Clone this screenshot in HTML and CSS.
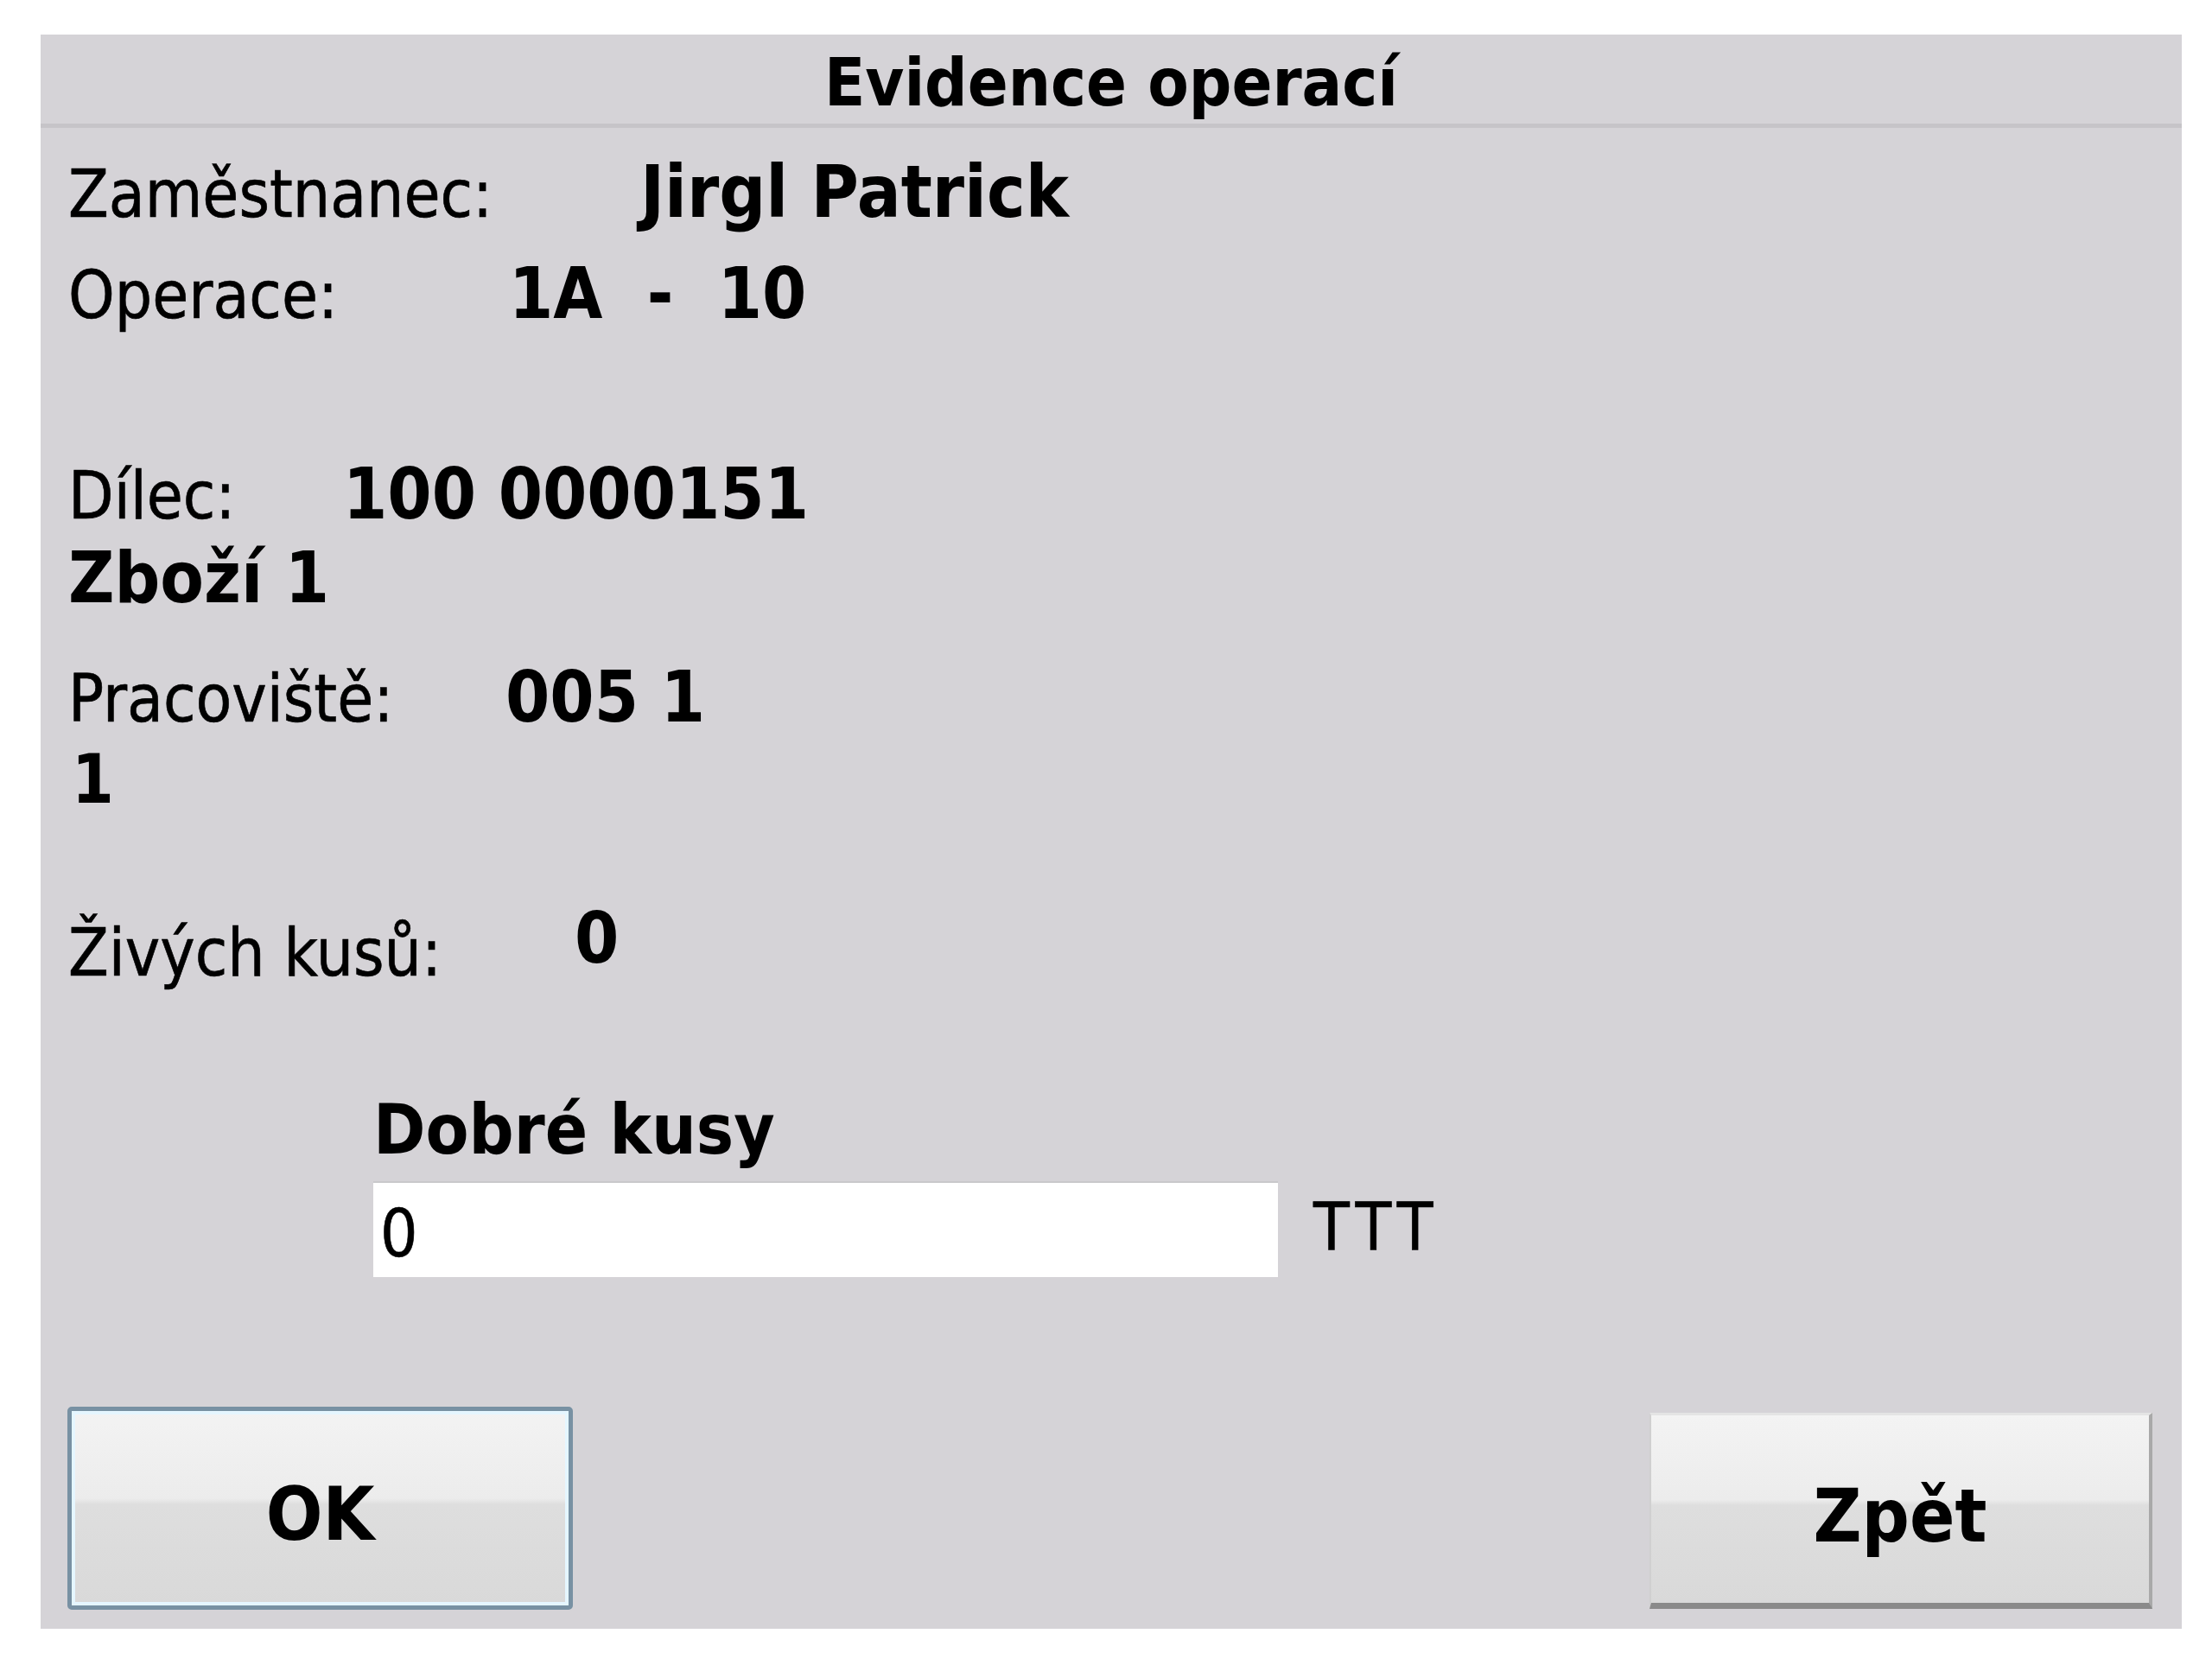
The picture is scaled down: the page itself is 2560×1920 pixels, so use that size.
FILE: index.html
```html
<!DOCTYPE html>
<html lang="cs">
<head>
  <meta charset="UTF-8" />
  <title>Evidence operací</title>
  <link rel="stylesheet" href="styles.css">
</head>
<body>
  <div class="dialog">
    <div class="title">Evidence operací</div>

    <div class="content">
      <div class="row row-employee">
        <span class="label">Zaměstnanec:</span>
        <span class="value">Jirgl Patrick</span>
      </div>
      <div class="row row-operation">
        <span class="label">Operace:</span>
        <span class="value">1A&nbsp; -&nbsp; 10</span>
      </div>
      <div class="row row-part">
        <span class="label">Dílec:</span>
        <span class="value">100 0000151</span>
      </div>
      <div class="row row-part-name">
        <span class="strong">Zboží 1</span>
      </div>
      <div class="row row-workplace">
        <span class="label">Pracoviště:</span>
        <span class="value">005 1</span>
      </div>
      <div class="row row-workplace-name">
        <span class="strong">1</span>
      </div>
      <div class="row row-alive">
        <span class="label">Živých kusů:</span>
        <span class="value">0</span>
      </div>

      <!-- Dobré kusy -->
      <div class="qty">
        <label for="goodPieces" class="qty-label">Dobré kusy</label>
        <div class="qty-input">
          <input type="text" id="goodPieces" value="0" />
          <span class="unit">TTT</span>
        </div>
      </div>
    </div>

    <div class="buttons">
      <button class="btn btn-ok" type="button">OK</button>
      <button class="btn btn-back" type="button">Zpět</button>
    </div>
  </div>
</body>
</html>
```

FILE: styles.css
```css
* {
  box-sizing: border-box;
}
body {
  margin: 0;
  background: #ffffff;
  font-family: 'DejaVu Sans', 'Liberation Sans', sans-serif;
  font-stretch: condensed;
  color: #000000;
}

.dialog {
  margin: 40px 0 0 47px;
  width: 2478px;
  height: 1845px;
  background: #d5d3d7;
  display: flex;
  flex-direction: column;
}

.title {
  height: 108px;
  padding-top: 17px;
  text-align: center;
  font-size: 77px;
  font-weight: bold;
  line-height: 1;
  border-bottom: 5px solid #c6c4c8;
}

.content {
  padding-left: 32px;
}

.row {
  display: flex;
  align-items: baseline;
  line-height: 1;
  font-size: 76px;
}

.label {
  font-size: 76px;
  -webkit-text-stroke: 0.6px #000000;
}
.value {
  font-size: 82px;
  font-weight: bold;
}
.strong {
  font-size: 82px;
  font-weight: bold;
}

.row-employee { margin-top: 32px; }
.row-employee .label { width: 662px; }
.row-employee .value { font-size: 84px; }

.row-operation { margin-top: 35px; }
.row-operation .label { width: 510px; }

.row-part { margin-top: 150px; }
.row-part .label { width: 318px; }

.row-part-name { margin-top: 15px; }

.row-workplace { margin-top: 56px; }
.row-workplace .label { width: 506px; }

.row-workplace-name { margin-top: 15px; padding-left: 4px; }
.row-workplace-name .strong { font-size: 78px; }

.row-alive {
  margin-top: 104px;
  align-items: flex-start;
}
.row-alive .label {
  width: 586px;
  margin-top: 20px;
}

.qty {
  margin-top: 126px;
  margin-left: 353px;
}
.qty-label {
  display: block;
  font-size: 81px;
  font-weight: bold;
  line-height: 1;
}
.qty-input {
  margin-top: 19px;
  display: flex;
  align-items: flex-start;
}
.qty-input input {
  width: 1047px;
  height: 111px;
  border: none;
  border-top: 2px solid #c9c8cb;
  background: #ffffff;
  font-family: inherit;
  font-stretch: condensed;
  font-size: 76px;
  padding: 8px 0 0 8px;
  outline: none;
  -webkit-text-stroke: 0.6px #000000;
}
.unit {
  margin-left: 41px;
  margin-top: 16px;
  font-size: 76px;
  line-height: 1;
  letter-spacing: 8px;
  -webkit-text-stroke: 0.6px #000000;
}

.buttons {
  margin-top: auto;
  padding: 0 34px 22px 31px;
  display: flex;
  justify-content: space-between;
  align-items: flex-end;
}

.btn {
  font-family: inherit;
  font-stretch: condensed;
  font-size: 86px;
  font-weight: bold;
  line-height: 1;
  color: #000000;
  cursor: pointer;
  background: linear-gradient(#f3f3f3 0%, #ececec 45%, #dedede 48%, #d9d9d9 100%);
}

.btn-ok {
  width: 585px;
  height: 235px;
  padding-top: 14px;
  border: 5px solid #7891a3;
  border-radius: 5px;
  box-shadow: inset 0 0 0 4px #e5f6ff;
}

.btn-back {
  width: 582px;
  height: 227px;
  margin-bottom: 1px;
  padding-top: 16px;
  border-top: 3px solid #e4e4e4;
  border-left: 2px solid #d0d0d0;
  border-right: 4px solid #a9a9a9;
  border-bottom: 7px solid #8a8a8a;
}
```
